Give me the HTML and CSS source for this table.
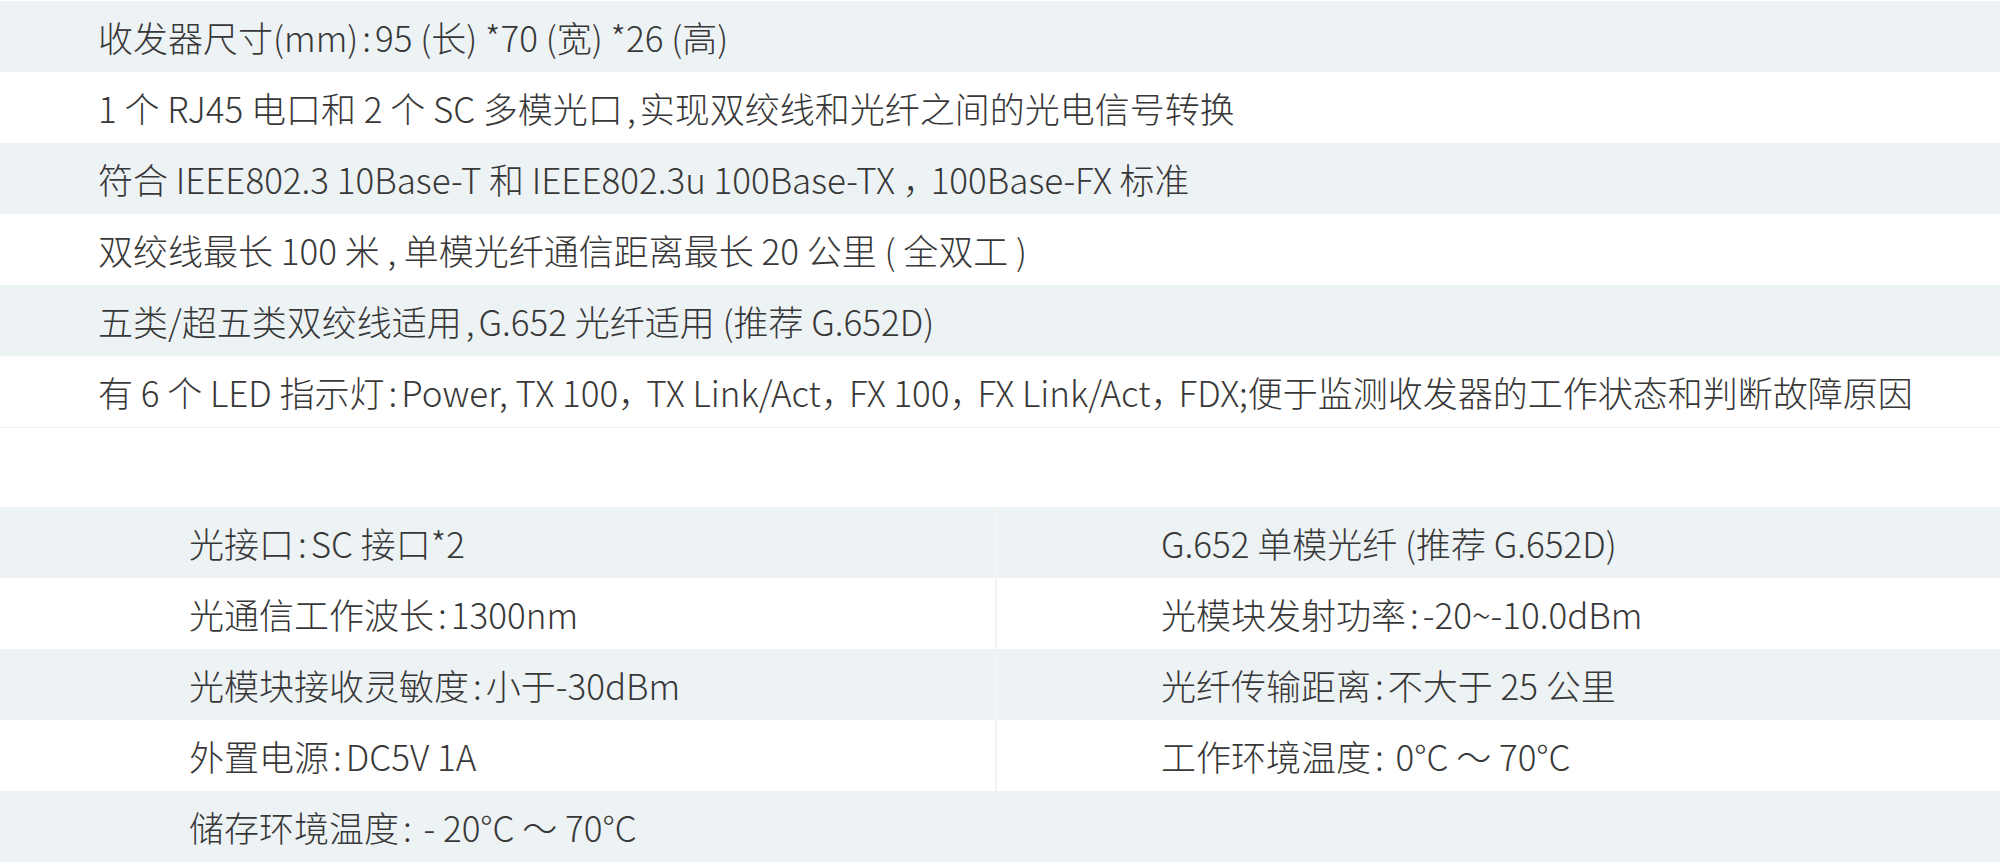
FILE: index.html
```html
<!DOCTYPE html>
<html lang="zh-CN">
<head>
<meta charset="utf-8">
<title>收发器参数</title>
<link rel="stylesheet" href="styles.css">
</head>
<body>
<div class="page">
  <div class="features">
    <div class="feat shade">收发器尺寸(mm)<span class="colon">:</span>95 (长) *70 (宽) *26 (高)</div>
    <div class="feat">1 个 RJ45 电口和 2 个 SC 多模光口<span class="colon">,</span>实现双绞线和光纤之间的光电信号转换</div>
    <div class="feat shade">符合 IEEE802.3 10Base-T 和 IEEE802.3u 100Base-TX <span class="fwc">，</span>100Base-FX 标准</div>
    <div class="feat">双绞线最长 100 米 , 单模光纤通信距离最长 20 公里 ( 全双工 )</div>
    <div class="feat shade">五类/超五类双绞线适用<span class="colon">,</span>G.652 光纤适用 (推荐 G.652D)</div>
    <div class="feat">有 6 个 LED 指示灯<span class="colon">:</span>Power, TX 100<span class="fwc">，</span>TX Link/Act<span class="fwc">，</span>FX 100<span class="fwc">，</span>FX Link/Act<span class="fwc">，</span>FDX;便于监测收发器的工作状态和判断故障原因</div>
  </div>
  <div class="specs">
    <div class="spec left shade">光接口<span class="colon">:</span>SC 接口*2</div>
    <div class="spec right shade">G.652 单模光纤 (推荐 G.652D)</div>
    <div class="spec left">光通信工作波长<span class="colon">:</span>1300nm</div>
    <div class="spec right">光模块发射功率<span class="colon">:</span>-20~-10.0dBm</div>
    <div class="spec left shade">光模块接收灵敏度<span class="colon">:</span>小于-30dBm</div>
    <div class="spec right shade">光纤传输距离<span class="colon">:</span>不大于 25 公里</div>
    <div class="spec left">外置电源<span class="colon">:</span>DC5V 1A</div>
    <div class="spec right">工作环境温度<span class="colon">:</span> 0°C ～ 70°C</div>
    <div class="spec full shade">储存环境温度<span class="colon">:</span> - 20°C ～ 70°C</div>
  </div>
</div>
</body>
</html>
```
FILE: styles.css
```css
html, body {
  margin: 0;
  padding: 0;
  background: #ffffff;
}
body {
  font-family: "Noto Sans CJK SC", "Noto Sans", sans-serif;
  font-weight: 300;
  color: #383838;
  font-size: 35px;
}
.page {
  width: 2000px;
  padding-top: 1px;
}
.features {
  display: flex;
  flex-direction: column;
  border-bottom: 1px solid #eeeeee;
}
.feat {
  height: 71px;
  display: flex;
  align-items: center;
  padding-left: 98px;
  white-space: pre;
}
.shade {
  background: #edf2f5;
}
.colon {
  margin: 0 4px;
}
.fwc {
  letter-spacing: -7px;
}
.specs {
  margin-top: 79px;
  display: grid;
  grid-template-columns: 997px 1fr;
  grid-auto-rows: 71px;
}
.spec {
  display: flex;
  align-items: center;
  white-space: pre;
}
.spec.left {
  padding-left: 189px;
  border-right: 2px solid #f3f4f5;
}
.spec.right {
  padding-left: 164px;
}
.spec.full {
  grid-column: 1 / -1;
  padding-left: 189px;
}
```
